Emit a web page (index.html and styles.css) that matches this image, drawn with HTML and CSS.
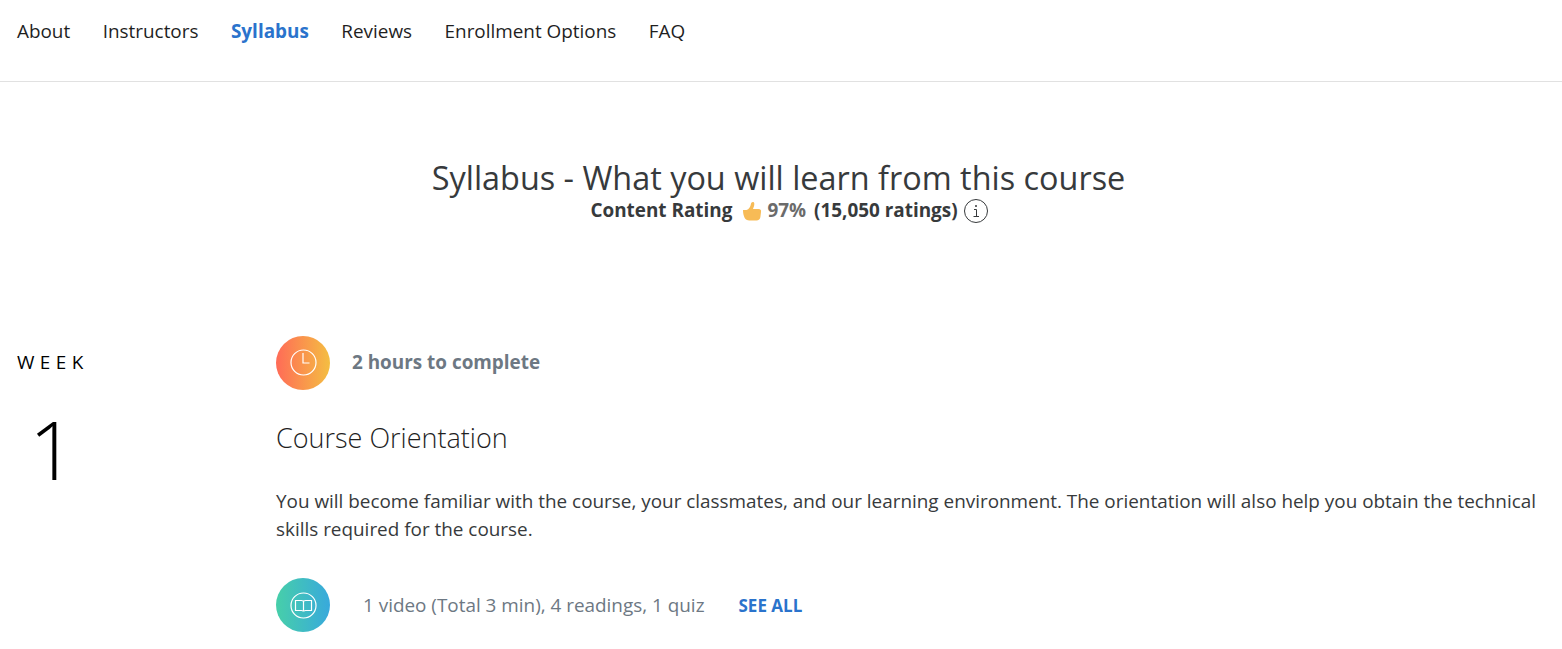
FILE: index.html
```html
<!DOCTYPE html>
<html lang="en">
  <head>
    <meta charset="UTF-8" />
    <meta name="viewport" content="width=device-width, initial-scale=1.0" />
    <title>Syllabus</title>
    <link rel="stylesheet" href="styles.css">
  </head>
  <body>
    <nav class="navbar">
      <a>About</a>
      <a>Instructors</a>
      <a class="active">Syllabus</a>
      <a>Reviews</a>
      <a>Enrollment Options</a>
      <a>FAQ</a>
    </nav>

    <header class="heading">
      <h1>Syllabus - What you will learn from this course</h1>
      <div class="rating">
        <span>Content Rating</span>
        <svg class="thumb" viewBox="0 0 20 20" width="20" height="20">
          <path fill="#f7bb56" d="M1 9h3.500c2.500-.8 4-3 4.400-6C9.200.6 12 .3 12.300 2.500c.2 1.700-.6 3.600-1.300 5.500h5.500c2.200 0 3 1.400 2.500 3l-.6 5c-.3 2.200-1.700 3.500-3.900 3.500H7.500C5 19.500 3.500 18.500 2.700 17 1.500 14.500 1 12 1 9z"/>
        </svg>
        <span class="percent">97%</span>
        <span class="count">(15,050 ratings)</span>
        <svg class="info" viewBox="0 0 26 26" width="26" height="26" fill="none" stroke="#373a3c">
          <circle cx="13" cy="13" r="11.500"/>
          <path d="M11 11.500h2.500v7M10.500 18.500h5.500"/>
          <circle cx="13" cy="8" r=".6" fill="#373a3c"/>
        </svg>
      </div>
    </header>

    <main class="week">
      <div class="week-label">
        <span class="word">WEEK</span>
        <span class="number">1</span>
      </div>
      <div class="content">
        <div class="row">
          <div class="circle clock">
            <svg viewBox="0 0 28 28" width="28" height="28" fill="none" stroke="#fff" stroke-width="1.200">
              <circle cx="14.500" cy="13.500" r="12.500"/>
              <path d="M14 4v10h6.500"/>
            </svg>
          </div>
          <span class="hours">2 hours to complete</span>
        </div>
        <h2>Course Orientation</h2>
        <p>You will become familiar with the course, your classmates, and our learning environment. The orientation will also help you obtain the technical skills required for the course.</p>
        <div class="row">
          <div class="circle book">
            <svg viewBox="0 0 28 28" width="28" height="28" fill="none" stroke="#fff" stroke-width="1.200">
              <circle cx="14.500" cy="14.500" r="12.500"/>
              <path d="M14.500 10v10.500M6.500 9.500h6q2 0 2 1 0-1 2-1h6v10h-6q-2 0-2 1 0-1-2-1h-6z"/>
            </svg>
          </div>
          <span class="items">1 video (Total 3 min), 4 readings, 1 quiz</span>
          <a class="see-all">SEE ALL</a>
        </div>
      </div>
    </main>
  </body>
</html>
```
FILE: styles.css
```css
body {
  margin: 0;
  background: #fff;
  color: #373a3c;
  font-family: "Open Sans", sans-serif;
  font-size: 18.9px;
  line-height: 28px;
  overflow: hidden;
}

.navbar {
  display: flex;
  gap: 32.500px;
  height: 82px;
  padding: 17px 17px 0;
  box-sizing: border-box;
  border-bottom: 1px solid #e1e1e1;
  color: #1f1f1f;
}

.navbar .active {
  color: #2a73cc;
  font-weight: 700;
}

.heading {
  display: flex;
  flex-direction: column;
  align-items: center;
  padding-top: 75px;
}

h1 {
  margin: 0 5px 0 0;
  font-size: 32.4px;
  font-weight: 400;
  line-height: 41px;
}

.rating {
  display: flex;
  align-items: center;
  height: 26px;
  margin-left: 17px;
  font-weight: 700;
}

.rating span {
  margin-top: -2px;
}

.thumb {
  margin: 0 5px 0 10px;
}

.percent {
  color: #6b6b6b;
}

.rating .count {
  margin: -2px 5px 0 8px;
}

.week {
  display: flex;
  padding: 112px 17px 0;
}

.week-label {
  display: flex;
  flex-direction: column;
  width: 259px;
  flex-shrink: 0;
  color: #000;
}

.word {
  margin-top: 12px;
  letter-spacing: 5.4px;
}

.number {
  margin: 19px 0 0 12px;
  font-size: 82px;
  font-weight: 300;
  line-height: 106px;
}

.row {
  display: flex;
  align-items: center;
}

.circle {
  display: flex;
  align-items: center;
  justify-content: center;
  width: 54px;
  height: 54px;
  border-radius: 50%;
}

.clock {
  background: linear-gradient(90deg, #ff6b57, #f4be42);
}

.book {
  background: linear-gradient(90deg, #47cfa9, #38a9dc);
}

.hours {
  margin: -2px 0 0 22px;
  color: #6d7883;
  font-weight: 700;
}

h2 {
  margin: 30px 0 31px;
  color: #1f1f1f;
  font-size: 27px;
  font-weight: 300;
  line-height: 36px;
}

p {
  margin: 0 0 35px;
}

.items {
  margin-left: 33px;
  color: #6d7883;
}

.see-all {
  margin: 2px 0 0 34px;
  color: #2a73cc;
  font-size: 17px;
  font-weight: 700;
}
```
